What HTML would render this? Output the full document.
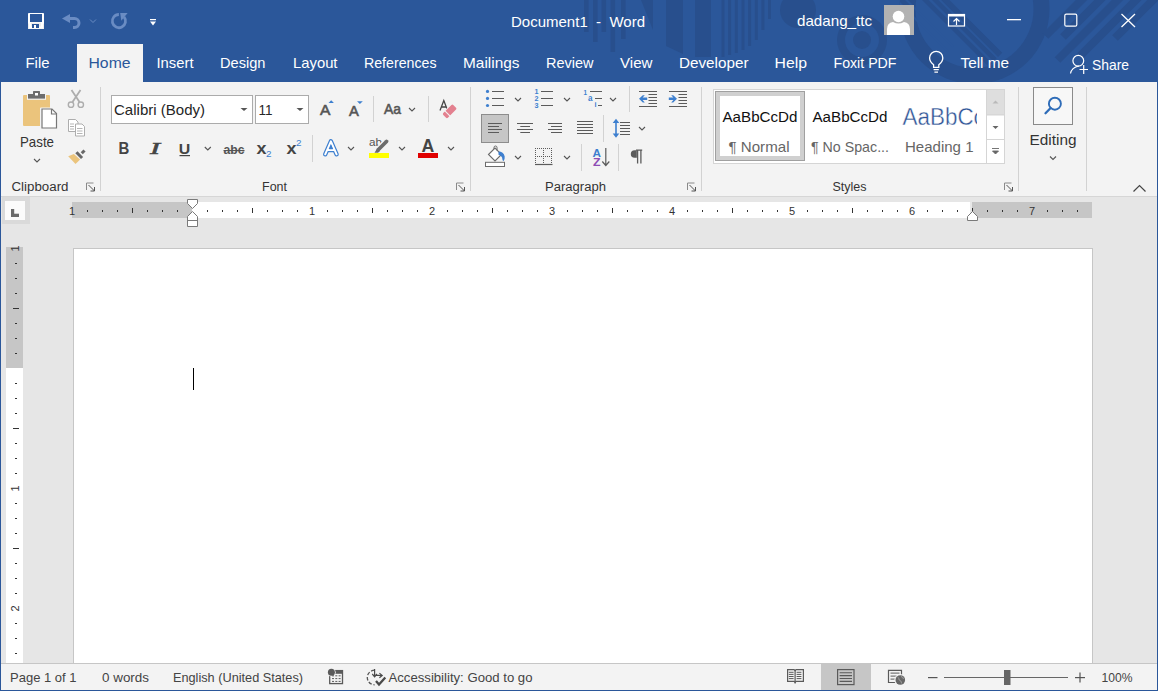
<!DOCTYPE html>
<html><head><meta charset="utf-8"><title>Document1 - Word</title>
<style>html,body{margin:0;padding:0;width:1158px;height:691px;overflow:hidden;background:#e6e6e6;font-family:"Liberation Sans",sans-serif;}</style>
</head><body>
<svg width="1158" height="691" viewBox="0 0 1158 691" style="display:block"><rect x="0" y="0" width="1158" height="691" fill="#e6e6e6" />
<rect x="0" y="0" width="1158" height="82" fill="#2b579a" />
<defs><clipPath id="ringclip"><circle cx="974.5" cy="9" r="59"/></clipPath><clipPath id="outerclip"><circle cx="974.5" cy="9" r="75"/></clipPath><clipPath id="tb"><rect x="0" y="0" width="1158" height="82"/></clipPath></defs>
<g fill="#284f8d" clip-path="url(#tb)"><rect x="584" y="0" width="4.6" height="32"/><rect x="593" y="0" width="4.6" height="42"/><rect x="601.5" y="0" width="4.6" height="32"/><rect x="610.5" y="0" width="4.6" height="52"/><rect x="621" y="0" width="4.6" height="39"/><polygon points="641,0 653,0 653,30"/><polygon points="666,0 683,0 683,54 666,46"/><rect x="695" y="0" width="16" height="57"/><rect x="721.5" y="0" width="3" height="57"/><rect x="728.1" y="0" width="3" height="55"/><rect x="734.8" y="0" width="3" height="53"/><rect x="741.5" y="0" width="3" height="50"/><rect x="748.1" y="0" width="3" height="46"/><rect x="754.8" y="0" width="3" height="40"/><rect x="761.4" y="0" width="3" height="30"/><rect x="768.0" y="0" width="3" height="19"/><circle cx="798" cy="10" r="18"/><circle cx="862" cy="40" r="25"/><circle cx="862" cy="40" r="17" fill="#2b579a"/><circle cx="862" cy="40" r="9"/><circle cx="974.5" cy="9" r="75"/><circle cx="974.5" cy="9" r="59" fill="#2b579a"/><g clip-path="url(#outerclip)"><polygon points="861.0,-61.0 864.3,-64.3 991.8,63.2 988.5,66.5"/><polygon points="866.0,-66.0 869.2,-69.2 996.7,58.3 993.5,61.5"/><polygon points="870.6,-70.6 874.7,-74.7 1002.2,52.8 998.1,56.9"/><polygon points="847.5,-47.5 849.0,-49.0 949.0,51.0 947.5,52.5" fill="#2b579a"/><polygon points="852.5,-52.5 854.0,-54.0 954.0,46.0 952.5,47.5" fill="#2b579a"/></g><path d="M1089.5,-8 L1045.5,36" stroke="#284f8d" stroke-width="8"/><path d="M1108,-8 L1063,37" stroke="#284f8d" stroke-width="8"/><path d="M1125.5,-8 L1057.5,60" stroke="#284f8d" stroke-width="8"/><path d="M1144,-8 L1080,56" stroke="#284f8d" stroke-width="8"/><path d="M1161,-8 L1115,38" stroke="#284f8d" stroke-width="8"/></g>
<rect x="28" y="13" width="16" height="16" fill="#ffffff" rx="0.8"/>
<rect x="28" y="22.5" width="16" height="6.5" fill="#eeeeee" rx="0.8"/>
<path d="M28,22.5 h2 v5 h12 v-5 h2" fill="none" stroke="#ffffff" stroke-width="2"/>
<rect x="30" y="14" width="12" height="8" fill="#2b579a"/>
<rect x="32" y="24" width="7" height="4" fill="#2b579a"/>
<rect x="34" y="25" width="2" height="3" fill="#ffffff"/>
<path d="M62,18.4 L70,13.9 V22.9 z" fill="#6a8cc3"/>
<path d="M69,18.5 H74.5 A4.5,4.5 0 0 1 74.5,27.5 H73" fill="none" stroke="#6a8cc3" stroke-width="3"/>
<path d="M90,19.5 l3,3 l3,-3" fill="none" stroke="#6a8cc3" stroke-width="1"/>
<path d="M118.9,14.5 A6.6,6.6 0 1 0 124,16.9" fill="none" stroke="#6a8cc3" stroke-width="2.8"/>
<path d="M120.2,13 H127.6 L121.3,20.8 z" fill="#6a8cc3"/>
<rect x="150" y="19" width="6" height="1.2" fill="#ffffff"/><path d="M150,21.5 h6 l-3,4 z" fill="#ffffff"/>
<text x="511" y="27" font-family="Liberation Sans" font-size="15" fill="#ffffff" font-weight="normal" text-anchor="start" textLength="134" lengthAdjust="spacingAndGlyphs" >Document1&#160;&#160;-&#160;&#160;Word</text>
<text x="797" y="26" font-family="Liberation Sans" font-size="15" fill="#ffffff" font-weight="normal" text-anchor="start" textLength="75" lengthAdjust="spacingAndGlyphs" >dadang_ttc</text>
<rect x="884" y="5" width="30" height="30" fill="#b2b2b2" />
<circle cx="898.5" cy="16.5" r="5.8" fill="#ffffff"/>
<path d="M887,35 v-6 q0,-6 6,-7 q5.5,3 11,0 q6,1 6,7 v6 z" fill="#ffffff"/>
<rect x="948.5" y="14.5" width="16" height="11.5" fill="none" stroke="#ffffff" stroke-width="1.2"/>
<rect x="948.5" y="14.5" width="16" height="2" fill="#ffffff"/>
<path d="M956.5,25 v-6.5 M953.5,21.5 l3,-3 l3,3" fill="none" stroke="#ffffff" stroke-width="1.2"/>
<rect x="1007" y="19" width="14" height="1.3" fill="#ffffff" />
<rect x="1064.8" y="14.2" width="12" height="12" rx="1.5" fill="none" stroke="#ffffff" stroke-width="1.2"/>
<path d="M1121.5,14 L1135,27 M1135,14 L1121.5,27" stroke="#ffffff" stroke-width="1.3"/>
<rect x="77" y="44" width="66" height="38" fill="#f3f3f3" />
<text x="25.5" y="68" font-family="Liberation Sans" font-size="15" fill="#ffffff" font-weight="normal" text-anchor="start" textLength="24" lengthAdjust="spacingAndGlyphs" >File</text>
<text x="88.5" y="68" font-family="Liberation Sans" font-size="15" fill="#2b579a" font-weight="normal" text-anchor="start" textLength="42" lengthAdjust="spacingAndGlyphs" >Home</text>
<text x="156.5" y="68" font-family="Liberation Sans" font-size="15" fill="#ffffff" font-weight="normal" text-anchor="start" textLength="37" lengthAdjust="spacingAndGlyphs" >Insert</text>
<text x="220.0" y="68" font-family="Liberation Sans" font-size="15" fill="#ffffff" font-weight="normal" text-anchor="start" textLength="45.5" lengthAdjust="spacingAndGlyphs" >Design</text>
<text x="293.0" y="68" font-family="Liberation Sans" font-size="15" fill="#ffffff" font-weight="normal" text-anchor="start" textLength="44.5" lengthAdjust="spacingAndGlyphs" >Layout</text>
<text x="364.0" y="68" font-family="Liberation Sans" font-size="15" fill="#ffffff" font-weight="normal" text-anchor="start" textLength="72.5" lengthAdjust="spacingAndGlyphs" >References</text>
<text x="463.0" y="68" font-family="Liberation Sans" font-size="15" fill="#ffffff" font-weight="normal" text-anchor="start" textLength="56.5" lengthAdjust="spacingAndGlyphs" >Mailings</text>
<text x="546.0" y="68" font-family="Liberation Sans" font-size="15" fill="#ffffff" font-weight="normal" text-anchor="start" textLength="47.5" lengthAdjust="spacingAndGlyphs" >Review</text>
<text x="620.0" y="68" font-family="Liberation Sans" font-size="15" fill="#ffffff" font-weight="normal" text-anchor="start" textLength="32.5" lengthAdjust="spacingAndGlyphs" >View</text>
<text x="679.0" y="68" font-family="Liberation Sans" font-size="15" fill="#ffffff" font-weight="normal" text-anchor="start" textLength="69.5" lengthAdjust="spacingAndGlyphs" >Developer</text>
<text x="774.5" y="68" font-family="Liberation Sans" font-size="15" fill="#ffffff" font-weight="normal" text-anchor="start" textLength="32.5" lengthAdjust="spacingAndGlyphs" >Help</text>
<text x="833.5" y="68" font-family="Liberation Sans" font-size="15" fill="#ffffff" font-weight="normal" text-anchor="start" textLength="63" lengthAdjust="spacingAndGlyphs" >Foxit PDF</text>
<text x="960.5" y="68" font-family="Liberation Sans" font-size="15" fill="#ffffff" font-weight="normal" text-anchor="start" textLength="48.5" lengthAdjust="spacingAndGlyphs" >Tell me</text>
<text x="1092" y="69.7" font-family="Liberation Sans" font-size="15" fill="#ffffff" font-weight="normal" text-anchor="start" textLength="37" lengthAdjust="spacingAndGlyphs" >Share</text>
<path d="M933.6,67.3 v-2.6 q-4,-3.2 -4,-6.7 a6.6,6.6 0 0 1 13.2,0 q0,3.5 -4,6.7 v2.6 z" fill="none" stroke="#ffffff" stroke-width="1.3"/>
<path d="M933.6,69.6 h5.2 M934.4,72.2 h3.6" stroke="#ffffff" stroke-width="1.3"/>
<circle cx="1078.3" cy="60.8" r="5.4" fill="none" stroke="#ffffff" stroke-width="1.2"/>
<path d="M1070.5,73.5 q1,-6 8.5,-7.5" fill="none" stroke="#ffffff" stroke-width="1.2"/>
<path d="M1079.5,69.5 h8.5 M1083.7,65 v9" stroke="#ffffff" stroke-width="1.2"/>
<rect x="1" y="82" width="1156" height="114" fill="#f3f3f3" />
<rect x="1" y="196" width="1156" height="1" fill="#d6d6d6" />
<rect x="100" y="87" width="1" height="104" fill="#d2d2d2" />
<rect x="470" y="87" width="1" height="104" fill="#d2d2d2" />
<rect x="701" y="87" width="1" height="104" fill="#d2d2d2" />
<rect x="1018" y="87" width="1" height="104" fill="#d2d2d2" />
<rect x="1086" y="87" width="1" height="104" fill="#d2d2d2" />
<path d="M23,96 q0,-1 1,-1 h3 v4.5 h19 v-4.5 h3 q1,0 1,1 v12 h-10 v18 h-16 q-1,0 -1,-1 z" fill="#ebc47c"/>
<rect x="27" y="93" width="19" height="6.6" fill="#f3f3f3"/>
<rect x="28" y="94" width="17" height="4.6" fill="#6d6d6d"/><rect x="33" y="91" width="7" height="3.5" fill="#6d6d6d" rx="0.5"/><rect x="35" y="93" width="3" height="2.5" fill="#fff"/>
<path d="M42,109 h10 l4.5,4.5 v14.5 h-14.5 z" fill="#f3f3f3" stroke="#f3f3f3" stroke-width="3.2"/>
<path d="M42,109 h10 l4.5,4.5 v14.5 h-14.5 z" fill="#fff" stroke="#777" stroke-width="1.2"/>
<path d="M51.5,109 v5 h5" fill="none" stroke="#777" stroke-width="1.2"/>
<text x="20" y="147" font-family="Liberation Sans" font-size="15" fill="#333" font-weight="normal" text-anchor="start" textLength="34" lengthAdjust="spacingAndGlyphs" >Paste</text>
<path d="M34,159 l3.0,3 l3.0,-3" fill="none" stroke="#555" stroke-width="1.1"/>
<path d="M71.5,90 L79.5,102 M80.5,90 L72.5,102" stroke="#adadad" stroke-width="1.8" fill="none"/>
<circle cx="71" cy="104.7" r="2.7" fill="none" stroke="#adadad" stroke-width="1.4"/><circle cx="80.8" cy="104.7" r="2.7" fill="none" stroke="#adadad" stroke-width="1.4"/>
<path d="M68.5,119.5 h7 l2.5,2.5 v9.5 h-9.5 z" fill="#fff" stroke="#adadad" stroke-width="1"/>
<path d="M75.5,124 h6.5 l2.5,2.5 v9.5 h-9 z" fill="#fff" stroke="#adadad" stroke-width="1"/>
<path d="M70,124 h4 M70,126.5 h4 M70,129 h4 M77,128.5 h5.5 M77,131 h5.5 M77,133.5 h5.5" stroke="#adadad" stroke-width="0.9"/>
<polygon points="68.2,156.3 73.9,154.1 80.1,159.5 75.5,164.1" fill="#ebc47c"/>
<polygon points="75.3,153.3 77.5,151.2 83.1,157.0 81.0,159.0" fill="#676767"/>
<polygon points="80.7,152.2 83.4,149.4 85.6,151.6 82.8,154.3" fill="#676767"/>
<text x="11.5" y="191" font-family="Liberation Sans" font-size="12.5" fill="#333" font-weight="normal" text-anchor="start" textLength="57" lengthAdjust="spacingAndGlyphs" >Clipboard</text>
<path d="M86.5,190.0 v-7 h7" fill="none" stroke="#8a8a8a" stroke-width="1"/>
<path d="M88.5,185.0 l6,6 M94.5,187.0 v4 h-4" fill="none" stroke="#555" stroke-width="1"/>
<rect x="111.5" y="95.5" width="141" height="28" fill="#fff" stroke="#ababab"/>
<rect x="255.5" y="95.5" width="53" height="28" fill="#fff" stroke="#ababab"/>
<text x="114" y="115" font-family="Liberation Sans" font-size="15" fill="#262626" font-weight="normal" text-anchor="start" textLength="91" lengthAdjust="spacingAndGlyphs" >Calibri (Body)</text>
<text x="258.5" y="115" font-family="Liberation Sans" font-size="15" fill="#262626" font-weight="normal" text-anchor="start" textLength="14" lengthAdjust="spacingAndGlyphs" >11</text>
<path d="M240.5,108 h7 l-3.5,3 z" fill="#555"/><path d="M296.5,108 h7 l-3.5,3 z" fill="#555"/>
<text x="320" y="115" font-family="Liberation Sans" font-size="15" fill="#555" font-weight="normal" text-anchor="start" textLength="10.4" lengthAdjust="spacingAndGlyphs" stroke="#555" stroke-width="0.6">A</text>
<path d="M328.5,103 l2.7,-2.7 l2.7,2.7 z" fill="#3d7fcf"/>
<text x="349" y="116" font-family="Liberation Sans" font-size="14.5" fill="#555" font-weight="normal" text-anchor="start" textLength="9.8" lengthAdjust="spacingAndGlyphs" stroke="#555" stroke-width="0.6">A</text>
<path d="M357,101.3 h5.8 l-2.9,2.6 z" fill="#3d7fcf"/>
<rect x="373" y="96" width="1" height="26" fill="#d2d2d2" />
<text x="384" y="114.2" font-family="Liberation Sans" font-size="15" fill="#555" font-weight="normal" text-anchor="start" textLength="17" lengthAdjust="spacingAndGlyphs" stroke="#555" stroke-width="0.6">Aa</text>
<path d="M409,108 l3.0,3 l3.0,-3" fill="none" stroke="#555" stroke-width="1.1"/>
<rect x="428" y="96" width="1" height="26" fill="#d2d2d2" />
<path d="M440,110.6 L443.8,100.6 L447.6,110.6 M441.4,107 H446.3" fill="none" stroke="#474747" stroke-width="1.3"/>
<g transform="translate(449.65,111.35) rotate(-45)"><rect x="-8" y="-4.2" width="16" height="8.4" rx="2" fill="#f3f3f3"/><rect x="-7.05" y="-3.25" width="14.1" height="6.5" rx="1.3" fill="#e3808f"/><rect x="-3.6" y="-4" width="1.1" height="8" fill="#f3f3f3"/></g>
<text x="118.5" y="154" font-family="Liberation Sans" font-size="16.5" fill="#444" font-weight="bold" text-anchor="start" textLength="10.8" lengthAdjust="spacingAndGlyphs" >B</text>
<text x="150" y="154" font-family="Liberation Serif" font-size="16.5" fill="#444" font-weight="normal" text-anchor="start" textLength="10" lengthAdjust="spacingAndGlyphs" font-style="italic" stroke="#444" stroke-width="0.5">I</text>
<text x="178.8" y="153.5" font-family="Liberation Sans" font-size="15.5" fill="#444" font-weight="bold" text-anchor="start" textLength="11.5" lengthAdjust="spacingAndGlyphs" >U</text>
<rect x="179.5" y="155" width="10.5" height="1.2" fill="#444" />
<path d="M204.8,147 l3.0,3 l3.0,-3" fill="none" stroke="#555" stroke-width="1.1"/>
<text x="223.5" y="154" font-family="Liberation Sans" font-size="13.5" fill="#555" font-weight="bold" text-anchor="start" textLength="21" lengthAdjust="spacingAndGlyphs" >abc</text>
<rect x="223.5" y="150" width="21" height="1.1" fill="#555" />
<text x="256.5" y="154" font-family="Liberation Sans" font-size="16" fill="#444" font-weight="bold" text-anchor="start" textLength="10" lengthAdjust="spacingAndGlyphs" >x</text>
<text x="266" y="156.5" font-family="Liberation Sans" font-size="9" fill="#3d7fcf" font-weight="normal" text-anchor="start" textLength="5.5" lengthAdjust="spacingAndGlyphs" >2</text>
<text x="286.5" y="154" font-family="Liberation Sans" font-size="16" fill="#444" font-weight="bold" text-anchor="start" textLength="10" lengthAdjust="spacingAndGlyphs" >x</text>
<text x="296" y="146" font-family="Liberation Sans" font-size="9" fill="#3d7fcf" font-weight="normal" text-anchor="start" textLength="5.5" lengthAdjust="spacingAndGlyphs" >2</text>
<rect x="312" y="135" width="1" height="27" fill="#d2d2d2" />
<path d="M325.2,154.3 L330.9,141.3 L336.6,154.3 M327.6,150 H334.2" fill="none" stroke="#3d7fcf" stroke-width="4.4" stroke-linejoin="round" stroke-linecap="round"/>
<path d="M325.2,154.3 L330.9,141.3 L336.6,154.3 M327.6,150 H334.2" fill="none" stroke="#fff" stroke-width="2" stroke-linejoin="round" stroke-linecap="round"/>
<path d="M329.3,149.3 h3.6 l-1.8,-4.3 z" fill="#3d7fcf"/>
<path d="M348,147 l3.0,3 l3.0,-3" fill="none" stroke="#555" stroke-width="1.1"/>
<text x="369" y="145.8" font-family="Liberation Sans" font-size="10" fill="#555" font-weight="normal" text-anchor="start" textLength="13" lengthAdjust="spacingAndGlyphs" >ab</text>
<path d="M386.5,141.5 L378.5,149.5" stroke="#f3f3f3" stroke-width="6.5" stroke-linecap="round"/>
<path d="M386.5,141.5 L378.5,149.5" stroke="#6b6b6b" stroke-width="3.8" stroke-linecap="round"/>
<path d="M377.2,148.2 l2.8,2.8 l-2,1.8 h-3.5 z" fill="#6b6b6b"/>
<rect x="369" y="153" width="20" height="5" fill="#ffff00" />
<path d="M399,147 l3.0,3 l3.0,-3" fill="none" stroke="#555" stroke-width="1.1"/>
<text x="421.5" y="152.2" font-family="Liberation Sans" font-size="17.5" fill="#444" font-weight="bold" text-anchor="start" textLength="12.8" lengthAdjust="spacingAndGlyphs" >A</text>
<rect x="418" y="153" width="20" height="5" fill="#e00000" />
<path d="M448,147 l3.0,3 l3.0,-3" fill="none" stroke="#555" stroke-width="1.1"/>
<text x="262" y="191" font-family="Liberation Sans" font-size="12.5" fill="#333" font-weight="normal" text-anchor="start" textLength="25" lengthAdjust="spacingAndGlyphs" >Font</text>
<path d="M456.5,190.0 v-7 h7" fill="none" stroke="#8a8a8a" stroke-width="1"/>
<path d="M458.5,185.0 l6,6 M464.5,187.0 v4 h-4" fill="none" stroke="#555" stroke-width="1"/>
<circle cx="487.5" cy="91.4" r="1.6" fill="#3d7fcf"/>
<path d="M492,91.5 H504" stroke="#5b5b5b" stroke-width="1"/>
<circle cx="487.5" cy="98.4" r="1.6" fill="#3d7fcf"/>
<path d="M492,98.5 H504" stroke="#5b5b5b" stroke-width="1"/>
<circle cx="487.5" cy="105.5" r="1.6" fill="#3d7fcf"/>
<path d="M492,105.5 H504" stroke="#5b5b5b" stroke-width="1"/>
<path d="M515,98 l3.0,3 l3.0,-3" fill="none" stroke="#555" stroke-width="1.1"/>
<text x="534.5" y="94.0" font-family="Liberation Sans" font-size="7.5" fill="#3d7fcf" font-weight="bold" text-anchor="start" textLength="4" lengthAdjust="spacingAndGlyphs" >1</text>
<path d="M541,91.5 H553" stroke="#5b5b5b" stroke-width="1"/>
<text x="534.5" y="101.0" font-family="Liberation Sans" font-size="7.5" fill="#3d7fcf" font-weight="bold" text-anchor="start" textLength="4" lengthAdjust="spacingAndGlyphs" >2</text>
<path d="M541,98.5 H553" stroke="#5b5b5b" stroke-width="1"/>
<text x="534.5" y="108.1" font-family="Liberation Sans" font-size="7.5" fill="#3d7fcf" font-weight="bold" text-anchor="start" textLength="4" lengthAdjust="spacingAndGlyphs" >3</text>
<path d="M541,105.5 H553" stroke="#5b5b5b" stroke-width="1"/>
<path d="M564,98 l3.0,3 l3.0,-3" fill="none" stroke="#555" stroke-width="1.1"/>
<text x="583.5" y="94.8" font-family="Liberation Sans" font-size="7" fill="#3d7fcf" font-weight="bold" text-anchor="start" textLength="3.5" lengthAdjust="spacingAndGlyphs" >1</text>
<path d="M590,91.5 H602" stroke="#5b5b5b" stroke-width="1"/>
<text x="588" y="100.8" font-family="Liberation Sans" font-size="8.5" fill="#3d7fcf" font-weight="bold" text-anchor="start" textLength="4.5" lengthAdjust="spacingAndGlyphs" >a</text>
<path d="M595,98.5 H602" stroke="#5b5b5b" stroke-width="1"/>
<text x="594.5" y="106.6" font-family="Liberation Sans" font-size="7" fill="#3d7fcf" font-weight="bold" text-anchor="start" textLength="2" lengthAdjust="spacingAndGlyphs" >i</text>
<path d="M598,105.5 H602" stroke="#5b5b5b" stroke-width="1"/>
<path d="M610,98 l3.0,3 l3.0,-3" fill="none" stroke="#555" stroke-width="1.1"/>
<rect x="629" y="86" width="1" height="26" fill="#d2d2d2" />
<path d="M639,91.5 H657" stroke="#5b5b5b" stroke-width="1"/>
<path d="M639,106.5 H657" stroke="#5b5b5b" stroke-width="1"/>
<path d="M648.5,94.5 H657" stroke="#5b5b5b" stroke-width="1"/>
<path d="M648.5,97.5 H657" stroke="#5b5b5b" stroke-width="1"/>
<path d="M648.5,100.5 H657" stroke="#5b5b5b" stroke-width="1"/>
<path d="M648.5,103.5 H657" stroke="#5b5b5b" stroke-width="1"/>
<path d="M639,98.8 l3.8,-3.6 h2 l-2.2,2.4 h4.6 v2.4 h-4.6 l2.2,2.4 h-2 z" fill="#3d7fcf"/>
<path d="M669,91.5 H687" stroke="#5b5b5b" stroke-width="1"/>
<path d="M669,106.5 H687" stroke="#5b5b5b" stroke-width="1"/>
<path d="M678.5,94.5 H687" stroke="#5b5b5b" stroke-width="1"/>
<path d="M678.5,97.5 H687" stroke="#5b5b5b" stroke-width="1"/>
<path d="M678.5,100.5 H687" stroke="#5b5b5b" stroke-width="1"/>
<path d="M678.5,103.5 H687" stroke="#5b5b5b" stroke-width="1"/>
<path d="M677,98.8 l-3.8,-3.6 h-2 l2.2,2.4 h-4.6 v2.4 h4.6 l-2.2,2.4 h2 z" fill="#3d7fcf"/>
<rect x="481.5" y="114.5" width="27" height="28" fill="#c6c6c6" stroke="#8d8d8d"/>
<path d="M488,123.5 H502" stroke="#5b5b5b" stroke-width="1"/>
<path d="M517,123.5 H533" stroke="#5b5b5b" stroke-width="1"/>
<path d="M548,123.5 H562" stroke="#5b5b5b" stroke-width="1"/>
<path d="M488,126.5 H499" stroke="#5b5b5b" stroke-width="1"/>
<path d="M520.3,126.5 H530" stroke="#5b5b5b" stroke-width="1"/>
<path d="M551,126.5 H562" stroke="#5b5b5b" stroke-width="1"/>
<path d="M488,129.5 H502" stroke="#5b5b5b" stroke-width="1"/>
<path d="M517,129.5 H533" stroke="#5b5b5b" stroke-width="1"/>
<path d="M548,129.5 H562" stroke="#5b5b5b" stroke-width="1"/>
<path d="M488,132.5 H499" stroke="#5b5b5b" stroke-width="1"/>
<path d="M520.3,132.5 H530" stroke="#5b5b5b" stroke-width="1"/>
<path d="M551,132.5 H562" stroke="#5b5b5b" stroke-width="1"/>
<path d="M577,121.5 H593" stroke="#5b5b5b" stroke-width="1"/>
<path d="M577,124.5 H593" stroke="#5b5b5b" stroke-width="1"/>
<path d="M577,127.5 H593" stroke="#5b5b5b" stroke-width="1"/>
<path d="M577,130.5 H593" stroke="#5b5b5b" stroke-width="1"/>
<path d="M577,133.5 H593" stroke="#5b5b5b" stroke-width="1"/>
<rect x="603" y="115" width="1" height="27" fill="#d2d2d2" />
<path d="M616,118.7 l-3.3,4.3 h2.5 v10.4 h-2.5 l3.3,4.3 l3.3,-4.3 h-2.5 v-10.4 h2.5 z" fill="#3d7fcf"/>
<path d="M620,122.5 H630" stroke="#5b5b5b" stroke-width="1"/>
<path d="M620,125.5 H630" stroke="#5b5b5b" stroke-width="1"/>
<path d="M620,128.5 H630" stroke="#5b5b5b" stroke-width="1"/>
<path d="M620,131.5 H630" stroke="#5b5b5b" stroke-width="1"/>
<path d="M620,134.5 H630" stroke="#5b5b5b" stroke-width="1"/>
<path d="M639,127 l3.0,3 l3.0,-3" fill="none" stroke="#555" stroke-width="1.1"/>
<path d="M488.5,154.5 l6.5,-6.5 l6.5,6.5 l-6.5,6.5 z" fill="#fff" stroke="#6b6b6b" stroke-width="1.1"/>
<path d="M494,149 v-1.5 a1.5,1.5 0 0 1 3,0 v3" fill="none" stroke="#6b6b6b" stroke-width="1"/>
<path d="M498.5,151.5 q5,0 6.2,5 q0.3,2.5 -1.2,4.8 q-1.2,-0.8 -1.2,-2.5 q0,-2.5 -3.8,-4 z" fill="#3d7fcf"/>
<rect x="485.5" y="162.3" width="19" height="4.2" fill="#fff" stroke="#6b6b6b" stroke-width="1"/>
<path d="M515,156 l3.0,3 l3.0,-3" fill="none" stroke="#555" stroke-width="1.1"/>
<rect x="535" y="148" width="1" height="1" fill="#5b5b5b" />
<rect x="535" y="156" width="1" height="1" fill="#5b5b5b" />
<rect x="537" y="148" width="1" height="1" fill="#5b5b5b" />
<rect x="537" y="156" width="1" height="1" fill="#5b5b5b" />
<rect x="539" y="148" width="1" height="1" fill="#5b5b5b" />
<rect x="539" y="156" width="1" height="1" fill="#5b5b5b" />
<rect x="541" y="148" width="1" height="1" fill="#5b5b5b" />
<rect x="541" y="156" width="1" height="1" fill="#5b5b5b" />
<rect x="543" y="148" width="1" height="1" fill="#5b5b5b" />
<rect x="543" y="156" width="1" height="1" fill="#5b5b5b" />
<rect x="545" y="148" width="1" height="1" fill="#5b5b5b" />
<rect x="545" y="156" width="1" height="1" fill="#5b5b5b" />
<rect x="547" y="148" width="1" height="1" fill="#5b5b5b" />
<rect x="547" y="156" width="1" height="1" fill="#5b5b5b" />
<rect x="549" y="148" width="1" height="1" fill="#5b5b5b" />
<rect x="549" y="156" width="1" height="1" fill="#5b5b5b" />
<rect x="551" y="148" width="1" height="1" fill="#5b5b5b" />
<rect x="551" y="156" width="1" height="1" fill="#5b5b5b" />
<rect x="535" y="148" width="1" height="1" fill="#5b5b5b" />
<rect x="543" y="148" width="1" height="1" fill="#5b5b5b" />
<rect x="551" y="148" width="1" height="1" fill="#5b5b5b" />
<rect x="535" y="150" width="1" height="1" fill="#5b5b5b" />
<rect x="543" y="150" width="1" height="1" fill="#5b5b5b" />
<rect x="551" y="150" width="1" height="1" fill="#5b5b5b" />
<rect x="535" y="152" width="1" height="1" fill="#5b5b5b" />
<rect x="543" y="152" width="1" height="1" fill="#5b5b5b" />
<rect x="551" y="152" width="1" height="1" fill="#5b5b5b" />
<rect x="535" y="154" width="1" height="1" fill="#5b5b5b" />
<rect x="543" y="154" width="1" height="1" fill="#5b5b5b" />
<rect x="551" y="154" width="1" height="1" fill="#5b5b5b" />
<rect x="535" y="156" width="1" height="1" fill="#5b5b5b" />
<rect x="543" y="156" width="1" height="1" fill="#5b5b5b" />
<rect x="551" y="156" width="1" height="1" fill="#5b5b5b" />
<rect x="535" y="158" width="1" height="1" fill="#5b5b5b" />
<rect x="543" y="158" width="1" height="1" fill="#5b5b5b" />
<rect x="551" y="158" width="1" height="1" fill="#5b5b5b" />
<rect x="535" y="160" width="1" height="1" fill="#5b5b5b" />
<rect x="543" y="160" width="1" height="1" fill="#5b5b5b" />
<rect x="551" y="160" width="1" height="1" fill="#5b5b5b" />
<rect x="535" y="162" width="1" height="1" fill="#5b5b5b" />
<rect x="543" y="162" width="1" height="1" fill="#5b5b5b" />
<rect x="551" y="162" width="1" height="1" fill="#5b5b5b" />
<path d="M535,164.5 H552.5" stroke="#5b5b5b" stroke-width="1.2"/>
<path d="M564,156 l3.0,3 l3.0,-3" fill="none" stroke="#555" stroke-width="1.1"/>
<rect x="581" y="144" width="1" height="27" fill="#d2d2d2" />
<text x="592.5" y="156.5" font-family="Liberation Sans" font-size="11" fill="#3d7fcf" font-weight="bold" text-anchor="start" textLength="8.5" lengthAdjust="spacingAndGlyphs" >A</text>
<text x="593" y="166" font-family="Liberation Sans" font-size="10" fill="#8e4db5" font-weight="bold" text-anchor="start" textLength="7.5" lengthAdjust="spacingAndGlyphs" >Z</text>
<path d="M605.8,148 v17 M602.3,161.5 l3.5,4 l3.5,-4" fill="none" stroke="#5b5b5b" stroke-width="1.2"/>
<rect x="618" y="144" width="1" height="27" fill="#d2d2d2" />
<path d="M636.8,150.2 h-2.2 a3.8,3.8 0 0 0 0,7.6 h2.2 z" fill="#5b5b5b"/>
<path d="M636,150.2 h6.2 M637.6,150 v13.6 M640.9,150 v13.6" fill="none" stroke="#5b5b5b" stroke-width="1.3"/>
<text x="545" y="191" font-family="Liberation Sans" font-size="12.5" fill="#333" font-weight="normal" text-anchor="start" textLength="61" lengthAdjust="spacingAndGlyphs" >Paragraph</text>
<path d="M687.5,190.0 v-7 h7" fill="none" stroke="#8a8a8a" stroke-width="1"/>
<path d="M689.5,185.0 l6,6 M695.5,187.0 v4 h-4" fill="none" stroke="#555" stroke-width="1"/>
<rect x="713.5" y="89.5" width="291" height="74" fill="#fff" stroke="#d5d5d5"/>
<rect x="715.5" y="91.5" width="89" height="69" fill="none" stroke="#a0a0a0"/>
<rect x="718" y="94" width="84" height="64" fill="none" stroke="#d0d0d0" stroke-width="4"/>
<text x="722.5" y="122" font-family="Liberation Sans" font-size="15.5" fill="#111" font-weight="normal" text-anchor="start" textLength="75" lengthAdjust="spacingAndGlyphs" >AaBbCcDd</text>
<text x="728.5" y="152" font-family="Liberation Sans" font-size="14.5" fill="#666" font-weight="normal" text-anchor="start" textLength="61" lengthAdjust="spacingAndGlyphs" >&#182; Normal</text>
<text x="812.5" y="122" font-family="Liberation Sans" font-size="15.5" fill="#111" font-weight="normal" text-anchor="start" textLength="75" lengthAdjust="spacingAndGlyphs" >AaBbCcDd</text>
<text x="811" y="152" font-family="Liberation Sans" font-size="14.5" fill="#666" font-weight="normal" text-anchor="start" textLength="78" lengthAdjust="spacingAndGlyphs" >&#182; No Spac...</text>
<clipPath id="hclip"><rect x="890" y="95" width="87" height="40"/></clipPath>
<text x="902.5" y="124.6" font-family="Liberation Sans" font-size="23.5" fill="#2f5496" font-weight="normal" text-anchor="start" textLength="111" lengthAdjust="spacingAndGlyphs" clip-path="url(#hclip)" stroke="#fff" stroke-width="0.4">AaBbCcDd</text>
<text x="905" y="152.4" font-family="Liberation Sans" font-size="14.5" fill="#666" font-weight="normal" text-anchor="start" textLength="68.5" lengthAdjust="spacingAndGlyphs" >Heading 1</text>
<rect x="986.5" y="89.5" width="18" height="25.5" fill="#dedede" stroke="#d5d5d5"/>
<rect x="986.5" y="115" width="18" height="24.5" fill="#fff" stroke="#d5d5d5"/>
<rect x="986.5" y="139.5" width="18" height="24" fill="#fff" stroke="#d5d5d5"/>
<path d="M992.5,103.5 h6 l-3,-3 z" fill="#b9b9b9"/>
<path d="M992.5,126 h6 l-3,3 z" fill="#666"/>
<path d="M992,148.5 h7 M992.5,151 h6 l-3,3 z" stroke="#666" fill="#666" stroke-width="0.9"/>
<text x="832.5" y="191" font-family="Liberation Sans" font-size="12.5" fill="#333" font-weight="normal" text-anchor="start" textLength="34" lengthAdjust="spacingAndGlyphs" >Styles</text>
<path d="M1004.5,190.0 v-7 h7" fill="none" stroke="#8a8a8a" stroke-width="1"/>
<path d="M1006.5,185.0 l6,6 M1012.5,187.0 v4 h-4" fill="none" stroke="#555" stroke-width="1"/>
<rect x="1033.5" y="87.5" width="39" height="37" fill="#f7f7f7" stroke="#8a8a8a"/>
<circle cx="1054.9" cy="103.7" r="6" fill="none" stroke="#2e6cb8" stroke-width="1.9"/>
<path d="M1050.6,108 L1045.5,113.2" stroke="#2e6cb8" stroke-width="2.3" stroke-linecap="round"/>
<text x="1029.5" y="145" font-family="Liberation Sans" font-size="15" fill="#333" font-weight="normal" text-anchor="start" textLength="47" lengthAdjust="spacingAndGlyphs" >Editing</text>
<path d="M1050,156.5 l3.0,3 l3.0,-3" fill="none" stroke="#555" stroke-width="1.1"/>
<path d="M1133.5,191.5 l6,-6 l6,6" fill="none" stroke="#444" stroke-width="1.2"/>
<rect x="2" y="197" width="28" height="27" fill="#dadada" />
<rect x="5" y="201" width="20" height="19" fill="#fbfbfb" />
<rect x="11" y="209" width="3.2" height="8" fill="#6b6b6b" />
<rect x="11" y="213.7" width="8" height="3.3" fill="#6b6b6b" />
<rect x="72" y="202" width="1020" height="16" fill="#fff" />
<rect x="72" y="202" width="120" height="16" fill="#c6c6c6" />
<rect x="972" y="202" width="120" height="16" fill="#c6c6c6" />
<text x="72" y="214.5" font-family="Liberation Sans" font-size="11" fill="#333" font-weight="normal" text-anchor="middle" >1</text>
<rect x="87" y="210" width="1" height="2" fill="#333" />
<rect x="102" y="210" width="1" height="2" fill="#333" />
<rect x="117" y="210" width="1" height="2" fill="#333" />
<rect x="132" y="208" width="1" height="5" fill="#333" />
<rect x="147" y="210" width="1" height="2" fill="#333" />
<rect x="162" y="210" width="1" height="2" fill="#333" />
<rect x="177" y="210" width="1" height="2" fill="#333" />
<rect x="207" y="210" width="1" height="2" fill="#333" />
<rect x="222" y="210" width="1" height="2" fill="#333" />
<rect x="237" y="210" width="1" height="2" fill="#333" />
<rect x="252" y="208" width="1" height="5" fill="#333" />
<rect x="267" y="210" width="1" height="2" fill="#333" />
<rect x="282" y="210" width="1" height="2" fill="#333" />
<rect x="297" y="210" width="1" height="2" fill="#333" />
<text x="312" y="214.5" font-family="Liberation Sans" font-size="11" fill="#333" font-weight="normal" text-anchor="middle" >1</text>
<rect x="327" y="210" width="1" height="2" fill="#333" />
<rect x="342" y="210" width="1" height="2" fill="#333" />
<rect x="357" y="210" width="1" height="2" fill="#333" />
<rect x="372" y="208" width="1" height="5" fill="#333" />
<rect x="387" y="210" width="1" height="2" fill="#333" />
<rect x="402" y="210" width="1" height="2" fill="#333" />
<rect x="417" y="210" width="1" height="2" fill="#333" />
<text x="432" y="214.5" font-family="Liberation Sans" font-size="11" fill="#333" font-weight="normal" text-anchor="middle" >2</text>
<rect x="447" y="210" width="1" height="2" fill="#333" />
<rect x="462" y="210" width="1" height="2" fill="#333" />
<rect x="477" y="210" width="1" height="2" fill="#333" />
<rect x="492" y="208" width="1" height="5" fill="#333" />
<rect x="507" y="210" width="1" height="2" fill="#333" />
<rect x="522" y="210" width="1" height="2" fill="#333" />
<rect x="537" y="210" width="1" height="2" fill="#333" />
<text x="552" y="214.5" font-family="Liberation Sans" font-size="11" fill="#333" font-weight="normal" text-anchor="middle" >3</text>
<rect x="567" y="210" width="1" height="2" fill="#333" />
<rect x="582" y="210" width="1" height="2" fill="#333" />
<rect x="597" y="210" width="1" height="2" fill="#333" />
<rect x="612" y="208" width="1" height="5" fill="#333" />
<rect x="627" y="210" width="1" height="2" fill="#333" />
<rect x="642" y="210" width="1" height="2" fill="#333" />
<rect x="657" y="210" width="1" height="2" fill="#333" />
<text x="672" y="214.5" font-family="Liberation Sans" font-size="11" fill="#333" font-weight="normal" text-anchor="middle" >4</text>
<rect x="687" y="210" width="1" height="2" fill="#333" />
<rect x="702" y="210" width="1" height="2" fill="#333" />
<rect x="717" y="210" width="1" height="2" fill="#333" />
<rect x="732" y="208" width="1" height="5" fill="#333" />
<rect x="747" y="210" width="1" height="2" fill="#333" />
<rect x="762" y="210" width="1" height="2" fill="#333" />
<rect x="777" y="210" width="1" height="2" fill="#333" />
<text x="792" y="214.5" font-family="Liberation Sans" font-size="11" fill="#333" font-weight="normal" text-anchor="middle" >5</text>
<rect x="807" y="210" width="1" height="2" fill="#333" />
<rect x="822" y="210" width="1" height="2" fill="#333" />
<rect x="837" y="210" width="1" height="2" fill="#333" />
<rect x="852" y="208" width="1" height="5" fill="#333" />
<rect x="867" y="210" width="1" height="2" fill="#333" />
<rect x="882" y="210" width="1" height="2" fill="#333" />
<rect x="897" y="210" width="1" height="2" fill="#333" />
<text x="912" y="214.5" font-family="Liberation Sans" font-size="11" fill="#333" font-weight="normal" text-anchor="middle" >6</text>
<rect x="927" y="210" width="1" height="2" fill="#333" />
<rect x="942" y="210" width="1" height="2" fill="#333" />
<rect x="957" y="210" width="1" height="2" fill="#333" />
<rect x="972" y="208" width="1" height="5" fill="#333" />
<rect x="987" y="210" width="1" height="2" fill="#333" />
<rect x="1002" y="210" width="1" height="2" fill="#333" />
<rect x="1017" y="210" width="1" height="2" fill="#333" />
<text x="1032" y="214.5" font-family="Liberation Sans" font-size="11" fill="#333" font-weight="normal" text-anchor="middle" >7</text>
<rect x="1047" y="210" width="1" height="2" fill="#333" />
<rect x="1062" y="210" width="1" height="2" fill="#333" />
<rect x="1077" y="210" width="1" height="2" fill="#333" />
<path d="M187.5,199.5 h10 v4 l-5,5 l-5,-5 z" fill="#fff" stroke="#7a7a7a"/>
<path d="M192.5,211.5 l5,5 v10 h-10 v-10 z M187.5,220.5 h10" fill="#fff" stroke="#7a7a7a"/>
<rect x="970" y="202" width="2" height="16" fill="#e8e8e8" />
<path d="M972.5,211.5 l5,5 v4 h-10 v-4 z" fill="#fff" stroke="#7a7a7a"/>
<rect x="6" y="247" width="17" height="416" fill="#fff" />
<rect x="6" y="247" width="17" height="121" fill="#c6c6c6" />
<text x="0" y="0" font-family="Liberation Sans" font-size="11" fill="#333" text-anchor="middle" transform="translate(19,248.5) rotate(-90)">1</text>
<rect x="15" y="263" width="2" height="1" fill="#333" />
<rect x="15" y="278" width="2" height="1" fill="#333" />
<rect x="15" y="293" width="2" height="1" fill="#333" />
<rect x="13" y="308" width="6" height="1" fill="#333" />
<rect x="15" y="323" width="2" height="1" fill="#333" />
<rect x="15" y="338" width="2" height="1" fill="#333" />
<rect x="15" y="353" width="2" height="1" fill="#333" />
<rect x="15" y="383" width="2" height="1" fill="#333" />
<rect x="15" y="398" width="2" height="1" fill="#333" />
<rect x="15" y="413" width="2" height="1" fill="#333" />
<rect x="13" y="428" width="6" height="1" fill="#333" />
<rect x="15" y="443" width="2" height="1" fill="#333" />
<rect x="15" y="458" width="2" height="1" fill="#333" />
<rect x="15" y="473" width="2" height="1" fill="#333" />
<text x="0" y="0" font-family="Liberation Sans" font-size="11" fill="#333" text-anchor="middle" transform="translate(19,488.5) rotate(-90)">1</text>
<rect x="15" y="503" width="2" height="1" fill="#333" />
<rect x="15" y="518" width="2" height="1" fill="#333" />
<rect x="15" y="533" width="2" height="1" fill="#333" />
<rect x="13" y="548" width="6" height="1" fill="#333" />
<rect x="15" y="563" width="2" height="1" fill="#333" />
<rect x="15" y="578" width="2" height="1" fill="#333" />
<rect x="15" y="593" width="2" height="1" fill="#333" />
<text x="0" y="0" font-family="Liberation Sans" font-size="11" fill="#333" text-anchor="middle" transform="translate(19,608.5) rotate(-90)">2</text>
<rect x="15" y="623" width="2" height="1" fill="#333" />
<rect x="15" y="638" width="2" height="1" fill="#333" />
<rect x="15" y="653" width="2" height="1" fill="#333" />
<rect x="73" y="248" width="1020" height="415" fill="#c6c6c6" />
<rect x="74" y="249" width="1018" height="414" fill="#fff" />
<rect x="193" y="368" width="1" height="22" fill="#000" />
<rect x="1" y="663" width="1156" height="1" fill="#c6c6c6" />
<rect x="1" y="664" width="1156" height="26" fill="#f3f3f3" />
<text x="10" y="681.6" font-family="Liberation Sans" font-size="13" fill="#444" font-weight="normal" text-anchor="start" textLength="66.5" lengthAdjust="spacingAndGlyphs" >Page 1 of 1</text>
<text x="102" y="681.6" font-family="Liberation Sans" font-size="13" fill="#444" font-weight="normal" text-anchor="start" textLength="47" lengthAdjust="spacingAndGlyphs" >0 words</text>
<text x="173" y="681.6" font-family="Liberation Sans" font-size="13" fill="#444" font-weight="normal" text-anchor="start" textLength="130" lengthAdjust="spacingAndGlyphs" >English (United States)</text>
<rect x="329.7" y="670.6" width="12.8" height="13" fill="none" stroke="#5a5a5a" stroke-width="1.3"/>
<rect x="329" y="670" width="14" height="3.8" fill="#5a5a5a" />
<circle cx="331.4" cy="672.3" r="4.3" fill="#f3f3f3"/><circle cx="331.4" cy="672.3" r="3.5" fill="#5a5a5a"/>
<rect x="332" y="675.3" width="2" height="1" fill="#5a5a5a" />
<rect x="335.3" y="675.3" width="2" height="1" fill="#5a5a5a" />
<rect x="338.6" y="675.3" width="2" height="1" fill="#5a5a5a" />
<rect x="332" y="678.1" width="2" height="1" fill="#5a5a5a" />
<rect x="335.3" y="678.1" width="2" height="1" fill="#5a5a5a" />
<rect x="338.6" y="678.1" width="2" height="1" fill="#5a5a5a" />
<rect x="332" y="680.9" width="2" height="1" fill="#5a5a5a" />
<rect x="335.3" y="680.9" width="2" height="1" fill="#5a5a5a" />
<rect x="338.6" y="680.9" width="2" height="1" fill="#5a5a5a" />
<path d="M374.6,670.2 A7.3,7.3 0 0 0 374.6,684.8" fill="none" stroke="#555" stroke-width="1.3" stroke-dasharray="3.6,1.8"/>
<path d="M374.6,669 v7.5 M372.3,674 l2.3,2.8 l2.3,-2.8 M374.6,675.4 h7 M379.4,673.1 l2.8,2.3 l-2.8,2.3" fill="none" stroke="#4a4a4a" stroke-width="1.2"/>
<path d="M376,681 l3,3.6 l6.3,-7.2" fill="none" stroke="#4a4a4a" stroke-width="2.3"/>
<text x="388.5" y="681.6" font-family="Liberation Sans" font-size="13" fill="#444" font-weight="normal" text-anchor="start" textLength="144" lengthAdjust="spacingAndGlyphs" >Accessibility: Good to go</text>
<rect x="821" y="664" width="50" height="26" fill="#c6c6c6" />
<path d="M787.6,669.6 h6.5 l1,1 l1,-1 h7.3 v11.8 h-7.3 l-1,1 l-1,-1 h-6.5 z" fill="none" stroke="#5a5a5a" stroke-width="1.2"/>
<path d="M795.1,670 v13.5" stroke="#5a5a5a" stroke-width="1.2"/>
<path d="M788.8,672.3 h4.8 M788.8,674.4 h4.8 M788.8,676.5 h4.8 M788.8,678.6 h4.8 M796.6,672.3 h4.8 M796.6,674.4 h4.8 M796.6,676.5 h4.8 M796.6,678.6 h4.8" stroke="#5a5a5a" stroke-width="1"/>
<rect x="837.6" y="669.6" width="16.4" height="15" fill="none" stroke="#5a5a5a" stroke-width="1.2"/>
<path d="M839.6,672.7 h12.4 M839.6,675.6 h12.4 M839.6,678.5 h12.4 M839.6,681.4 h12.4" stroke="#5a5a5a" stroke-width="1.1"/>
<path d="M896,682.5 h-7.5 v-12.2 h13 v5" fill="none" stroke="#5a5a5a" stroke-width="1.2"/>
<path d="M890.5,673.1 h9 M890.5,676.1 h6.5 M890.5,679.1 h5" stroke="#5a5a5a" stroke-width="1"/>
<circle cx="900.3" cy="680" r="6" fill="#f3f3f3"/><circle cx="900.3" cy="680" r="4.8" fill="#666"/>
<path d="M897.5,677 q2,1 1.6,3 q2.2,0.2 2.6,3.5 M901.5,676 q0,2 2.5,2.5" stroke="#aaa" stroke-width="0.8" fill="none"/>
<rect x="928" y="677" width="9.5" height="1.2" fill="#555" />
<rect x="944" y="677" width="124" height="1" fill="#666" />
<rect x="1004" y="670" width="6.5" height="15" fill="#666" />
<rect x="1075" y="677" width="10" height="1.2" fill="#555" />
<rect x="1079.4" y="672.5" width="1.2" height="10" fill="#555" />
<text x="1101.5" y="681.6" font-family="Liberation Sans" font-size="13" fill="#444" font-weight="normal" text-anchor="start" textLength="31" lengthAdjust="spacingAndGlyphs" >100%</text>
<rect x="0" y="82" width="1" height="609" fill="#2b579a" />
<rect x="1157" y="82" width="1" height="609" fill="#2b579a" />
<rect x="0" y="690" width="1158" height="1" fill="#2b579a" /></svg>
</body></html>
